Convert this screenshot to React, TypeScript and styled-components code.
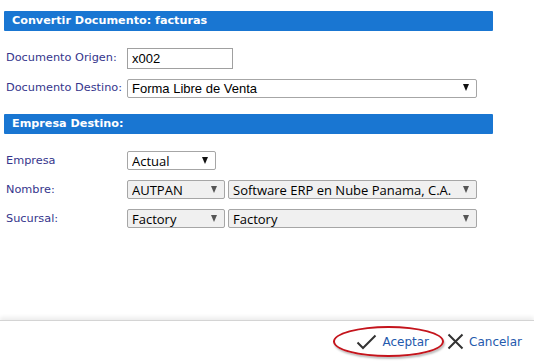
import styled, { createGlobalStyle } from 'styled-components';

const GlobalStyle = createGlobalStyle`
  html, body {
    margin: 0;
    padding: 0;
    background: #fff;
  }
  body {
    font-family: 'DejaVu Sans', Verdana, sans-serif;
  }
`;

const Page = styled.div`
  height: 362px;
  display: flex;
  flex-direction: column;
  overflow: hidden;
`;

const Content = styled.div`
  width: 489px;
  padding: 11px 0 0 4px;
  display: flex;
  flex-direction: column;
`;

const SectionBar = styled.div`
  height: 20px;
  background: #1976d2;
  color: #fff;
  font-weight: bold;
  font-size: 11.2px;
  line-height: 20px;
  padding-left: 8px;
  border-radius: 1px;
`;

const Rows = styled.div<{ $gap: number }>`
  display: flex;
  flex-direction: column;
  gap: ${(p) => p.$gap}px;
  padding: 17px 0 17px 2px;
`;

const Row = styled.div`
  display: flex;
  align-items: center;
  height: 19px;
`;

const Label = styled.label`
  width: 121px;
  flex-shrink: 0;
  font-size: 11.3px;
  color: #35358c;
`;

const TextInput = styled.input`
  box-sizing: border-box;
  width: 106px;
  height: 21px;
  margin-top: 1px;
  border: 1px solid #a0a0a0;
  padding: 0 4px;
  font-family: 'Liberation Sans', Arial, sans-serif;
  font-size: 13px;
  color: #000;
  outline: none;
`;

const SelectWrap = styled.div<{ $w: number }>`
  position: relative;
  width: ${(p) => p.$w}px;
  height: 19px;
  & + & {
    margin-left: 3px;
  }
`;

const NativeSelect = styled.select<{ $muted?: boolean; $font?: string }>`
  appearance: none;
  -webkit-appearance: none;
  box-sizing: border-box;
  width: 100%;
  height: 100%;
  margin: 0;
  padding: 0 18px 0 4px;
  border: 1px solid #a6a6a6;
  border-radius: 2px;
  background: ${(p) => (p.$muted ? '#f0f0f0' : '#fff')};
  font-family: ${(p) => p.$font || "'Liberation Sans', Arial, sans-serif"};
  font-size: 13px;
  color: #000;
  outline: none;
`;

const Arrow = styled.span<{ $muted?: boolean }>`
  position: absolute;
  right: 8px;
  top: 6px;
  width: 0;
  height: 0;
  border-left: 3.5px solid transparent;
  border-right: 3.5px solid transparent;
  border-top: 7px solid ${(p) => (p.$muted ? '#555' : '#111')};
  pointer-events: none;
`;

const Footer = styled.div`
  margin-top: auto;
  height: 41px;
  border-top: 1px solid #d4d4d4;
  box-shadow: 0 -3px 4px rgba(0, 0, 0, 0.07);
  display: flex;
  align-items: center;
  justify-content: flex-end;
  padding-right: 12px;
`;

const ActionButton = styled.button<{ $highlight?: boolean }>`
  display: flex;
  align-items: center;
  gap: 5px;
  background: none;
  border: ${(p) => (p.$highlight ? '2px solid #c4141c' : 'none')};
  border-radius: 50%;
  box-shadow: ${(p) => (p.$highlight ? '1px 2px 2px rgba(0,0,0,0.25)' : 'none')};
  height: ${(p) => (p.$highlight ? '31px' : 'auto')};
  padding: ${(p) => (p.$highlight ? '0 13px 0 21px' : '0 0 0 3px')};
  font-family: 'DejaVu Sans', Verdana, sans-serif;
  font-size: 12px;
  color: #2559ad;
  cursor: pointer;
`;

type Opt = { w: number; value: string; muted?: boolean; font?: string };

function Select({ w, value, muted, font }: Opt) {
  return (
    <SelectWrap $w={w}>
      <NativeSelect $muted={muted} $font={font} defaultValue={value}>
        <option value={value}>{value}</option>
      </NativeSelect>
      <Arrow $muted={muted} />
    </SelectWrap>
  );
}

const segoe = "'Open Sans', 'DejaVu Sans', sans-serif";

export default function App() {
  return (
    <Page>
      <GlobalStyle />
      <Content>
        <SectionBar>Convertir Documento: facturas</SectionBar>
        <Rows $gap={11}>
          <Row>
            <Label>Documento Origen:</Label>
            <TextInput defaultValue='x002' />
          </Row>
          <Row>
            <Label>Documento Destino:</Label>
            <Select w={350} value='Forma Libre de Venta' />
          </Row>
        </Rows>
        <SectionBar>Empresa Destino:</SectionBar>
        <Rows $gap={10}>
          <Row>
            <Label>Empresa</Label>
            <Select w={89} value='Actual' font={segoe} />
          </Row>
          <Row>
            <Label>Nombre:</Label>
            <Select w={98} value='AUTPAN' muted font={segoe} />
            <Select w={249} value='Software ERP en Nube Panama, C.A.' muted font={segoe} />
          </Row>
          <Row>
            <Label>Sucursal:</Label>
            <Select w={98} value='Factory' muted font={segoe} />
            <Select w={249} value='Factory' muted font={segoe} />
          </Row>
        </Rows>
      </Content>
      <Footer>
        <ActionButton $highlight>
          <svg width='21' height='16' viewBox='0 0 21 16'>
            <path d='M1.5 8.5 L7 14 L19.5 1.5' fill='none' stroke='#333' strokeWidth='2' />
          </svg>
          Aceptar
        </ActionButton>
        <ActionButton>
          <svg width='17' height='17' viewBox='0 0 17 17'>
            <path d='M1.5 1.5 L15.5 15.5 M15.5 1.5 L1.5 15.5' fill='none' stroke='#333' strokeWidth='2' />
          </svg>
          Cancelar
        </ActionButton>
      </Footer>
    </Page>
  );
}
